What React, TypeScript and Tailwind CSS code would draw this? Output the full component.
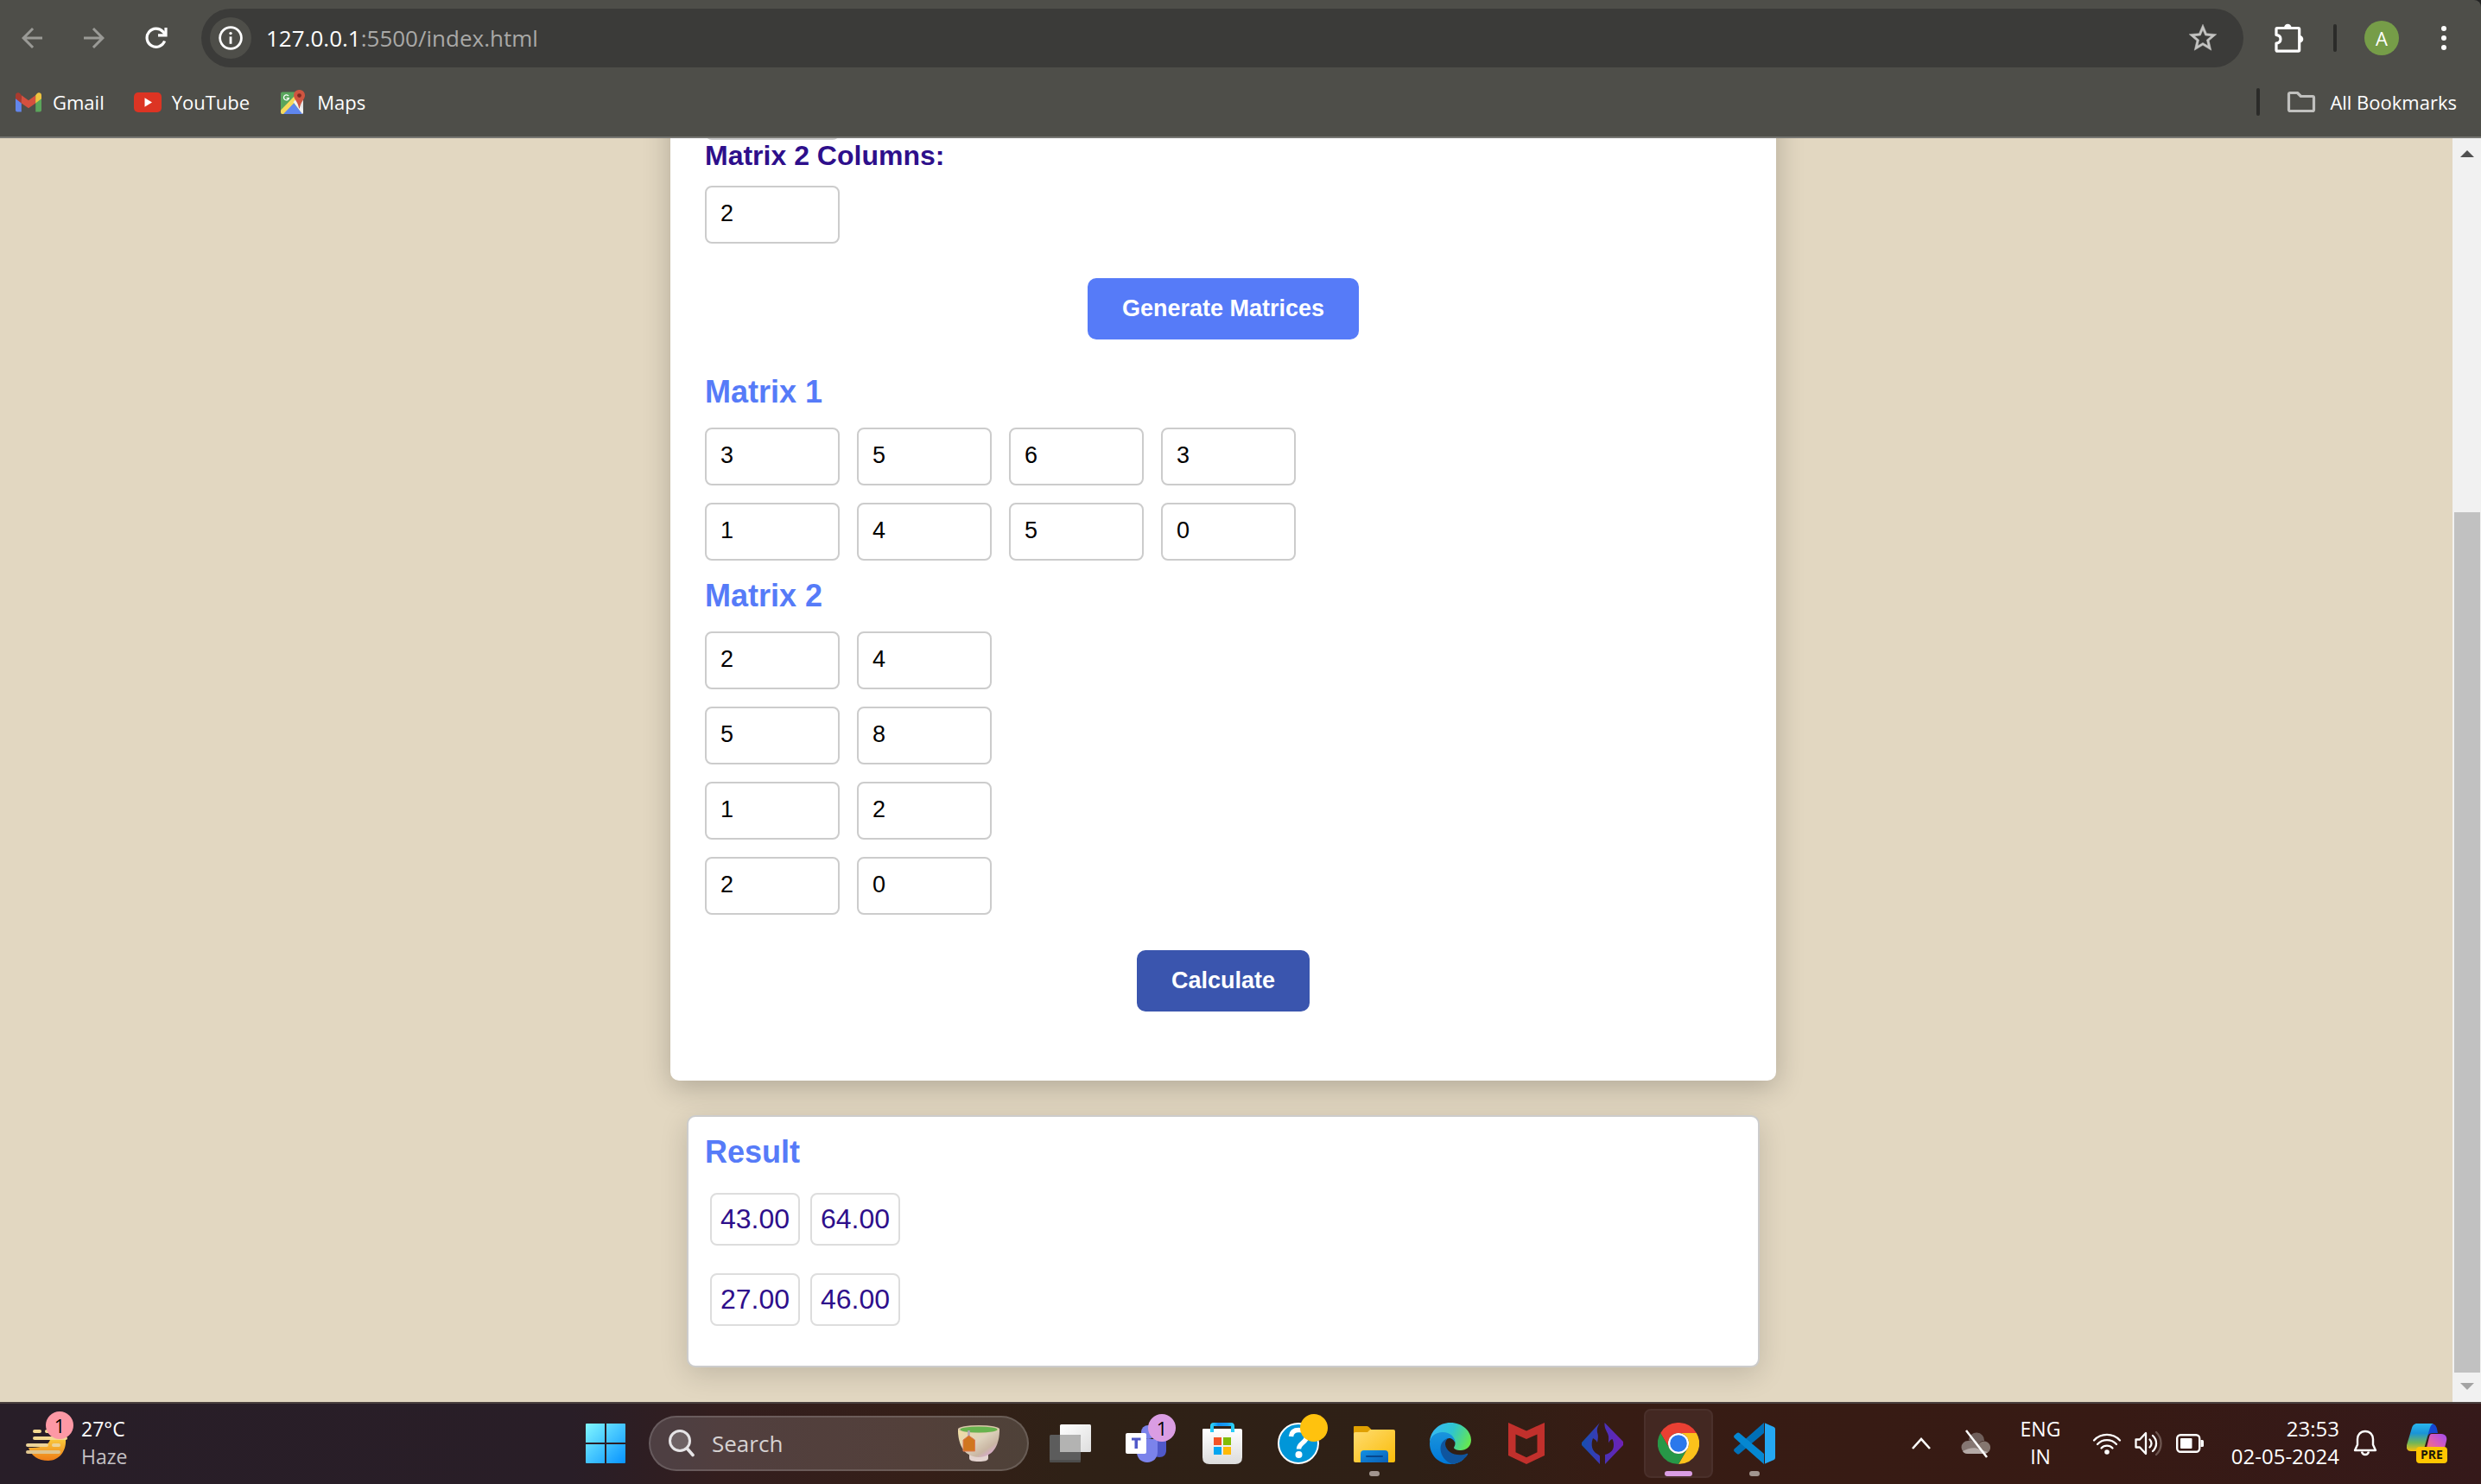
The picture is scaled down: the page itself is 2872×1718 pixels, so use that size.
import React from "react";

const UI = "font-['Open_Sans','Noto_Sans',sans-serif]";

function BackIcon() {
  return (
    <svg viewBox="0 0 24 24" className="size-9" fill="#9a9a96">
      <path d="M20 11H7.83l5.59-5.59L12 4l-8 8 8 8 1.41-1.41L7.83 13H20v-2z" />
    </svg>
  );
}

function ForwardIcon() {
  return (
    <svg viewBox="0 0 24 24" className="size-9" fill="#9a9a96">
      <path d="M12 4l-1.41 1.41L16.17 11H4v2h12.17l-5.58 5.59L12 20l8-8z" />
    </svg>
  );
}

function ReloadIcon() {
  return (
    <svg viewBox="0 0 26 26" className="size-[26px]" fill="none" stroke="#fff" strokeWidth="3.2">
      <path d="M22.6 16.5A10.6 10.6 0 1 1 20.6 5.6L23 8.2" />
      <path d="M24 1v8.9h-9" />
    </svg>
  );
}

function InfoIcon() {
  return (
    <svg viewBox="0 0 28 28" className="size-7" fill="none">
      <circle cx="14" cy="14" r="12.4" stroke="#fff" strokeWidth="2.8" />
      <path d="M14 12.4v8.4" stroke="#fff" strokeWidth="2.8" />
      <circle cx="14" cy="8.6" r="1.7" fill="#fff" />
    </svg>
  );
}

function StarIcon() {
  return (
    <svg viewBox="0 0 24 24" className="size-[38px]" fill="#c4c4c2" stroke="#c4c4c2" strokeWidth="0.3">
      <path d="M22 9.24l-7.19-.62L12 2 9.19 8.63 2 9.24l5.46 4.73L5.82 21 12 17.27 18.18 21l-1.63-7.03L22 9.24zM12 15.4l-3.76 2.27 1-4.28-3.32-2.88 4.38-.38L12 6.1l1.71 4.04 4.38.38-3.32 2.88 1 4.28L12 15.4z" />
    </svg>
  );
}

function PuzzleIcon() {
  return (
    <svg viewBox="0 0 34 34" className="size-[34px]">
      <path
        d="M3 5.5h24.5c.8 0 1.2.5 1.2 1.2V31c0 .8-.5 1.2-1.2 1.2H3.200c-.8 0-1.200-.5-1.200-1.200v-7.800c3.200-.4 5-2.300 5-4.900s-1.800-4.500-5-4.900V6.700c0-.8.4-1.200 1-1.200z"
        fill="none"
        stroke="#fff"
        strokeWidth="3.2"
        strokeLinejoin="round"
      />
      <path d="M11 5a4.300 4.300 0 0 1 8.600 0z M29 14a4.300 4.300 0 0 1 0 8.600z" fill="#fff" />
    </svg>
  );
}

function GmailIcon() {
  return (
    <svg viewBox="0 0 30 24" className="w-[30px] h-6">
      <path d="M0 4.500V21.500c0 1.100.9 2 2 2h4.800V9.500z" fill="#6286ec" />
      <path d="M30 4.500V21.500c0 1.100-.9 2-2 2h-4.800V9.500z" fill="#5ba55b" />
      <path d="M6.800 4.200v9.300l8.200 5.800 8.200-5.800V4.200L15 10.200z" fill="#d5503f" />
      <path d="M0 4.500v3.800l6.800 5.200V4.200L5.200 2.200C3 .4 0 1.700 0 4.500z" fill="#a93a2e" />
      <path d="M30 4.500v3.800l-6.800 5.200V4.200l1.600-2C27 .4 30 1.700 30 4.500z" fill="#eec33f" />
    </svg>
  );
}

function YouTubeIcon() {
  return (
    <svg viewBox="0 0 32 23" className="w-8 h-[23px]">
      <rect width="32" height="23" rx="5" fill="#dc3423" />
      <path d="M12.500 6.300v10.400l8.500-5.200z" fill="#fff" />
    </svg>
  );
}

function MapsIcon() {
  return (
    <svg viewBox="0 0 28 28" className="size-7">
      <path d="M2 2.500h17L24 10v16a2 2 0 0 1-2 2H2a2 2 0 0 1-2-2V4.500a2 2 0 0 1 2-2z" fill="#58a55c" />
      <path d="M15 14l11 12V12l-4-3z" fill="#e4e4e4" />
      <path d="M2 28l12-13.500L25.500 28z" fill="#5f86ee" />
      <path d="M0 23.500L17 6l2.500 5L3 28H2a2 2 0 0 1-2-2z" fill="#f6d95b" />
      <path d="M14.500 14.200l3.200-3.400 8.300 12.500v2.900a1.800 1.800 0 0 1-1 1.800z" fill="#f1f1f1" />
      <path d="M21.500 0A6.300 6.300 0 0 1 28 6.400c0 4.600-4.700 6.600-6.200 15.100h-.6C19.700 13 15 11 15 6.400A6.300 6.300 0 0 1 21.500 0z" fill="#cf5540" />
      <circle cx="21.500" cy="6.600" r="2.400" fill="#7c2a20" />
      <path d="M9 7.200A3 3 0 1 0 9.400 9.600H6.600" stroke="#fff" strokeWidth="1.300" fill="none" />
    </svg>
  );
}

function FolderOutline() {
  return (
    <svg viewBox="0 0 34 26" className="w-[34px] h-[26px]" fill="none" stroke="#c0c0be" strokeWidth="3.200" strokeLinejoin="round">
      <path d="M4 2.500h8.500l4 4H30c.8 0 1.500.7 1.500 1.500v14c0 .8-.7 1.500-1.500 1.500H4c-.8 0-1.500-.7-1.500-1.500V4c0-.8.7-1.500 1.500-1.500z" />
    </svg>
  );
}

function BrowserHeader() {
  return (
    <header className={`shrink-0 bg-[#4e4e49] border-b-2 border-[#767672] text-white rounded-tr-lg ${UI}`}>
      <div className="flex h-[88px] items-center">
        <nav aria-label="Navigation" className="flex items-center gap-9 pl-[19px]">
          <button aria-label="Back"><BackIcon /></button>
          <button aria-label="Forward"><ForwardIcon /></button>
          <button aria-label="Reload" className="pl-[5px]"><ReloadIcon /></button>
        </nav>
        <div className="ml-[39px] flex h-[68px] flex-1 items-center rounded-full bg-[#3b3b39] pl-2.5 pr-7">
          <button aria-label="View site information" className="flex size-12 items-center justify-center rounded-full bg-[#4e4e49]">
            <InfoIcon />
          </button>
          <a href="#address" className="ml-[17px] flex-1 whitespace-nowrap text-[26px] leading-9 text-[#a9a9a7]">
            <span className="text-white">127.0.0.1</span>:5500/index.html
          </a>
          <button aria-label="Bookmark this tab"><StarIcon /></button>
        </div>
        <div className="flex items-center pl-9 pr-10">
          <button aria-label="Extensions"><PuzzleIcon /></button>
          <span className="ml-[34px] h-8 w-1 rounded-sm bg-[#2b2b29]" />
          <button aria-label="Profile" className="ml-8 flex size-10 items-center justify-center rounded-full bg-[#769d48] text-[22px] leading-none">A</button>
          <button aria-label="Menu" className="ml-[49px] flex flex-col gap-[5px]">
            <span className="size-1.5 rounded-full bg-white" />
            <span className="size-1.5 rounded-full bg-white" />
            <span className="size-1.5 rounded-full bg-white" />
          </button>
        </div>
      </div>
      <div className="mb-2.5 flex h-[60px] items-center pl-[18px] pr-7 text-[22px] leading-8">
        <a href="#gmail" className="flex items-center gap-[13px]"><GmailIcon />Gmail</a>
        <a href="#youtube" className="ml-[34px] flex items-center gap-3"><YouTubeIcon />YouTube</a>
        <a href="#maps" className="ml-9 flex items-center gap-3.5"><MapsIcon />Maps</a>
        <span className="ml-auto h-8 w-1 rounded-sm bg-[#2b2b29]" />
        <button className="ml-[31px] flex items-center gap-4"><FolderOutline />All Bookmarks</button>
      </div>
    </header>
  );
}

function NumberField({ value, label, id }: { value: number; label?: string; id?: string }) {
  return (
    <input
      id={id}
      aria-label={label}
      type="number"
      defaultValue={value}
      className="block h-[67px] w-[156px] rounded-lg border-2 border-[#cccccc] bg-white px-4 pb-0.5 text-[27px] leading-8 text-black"
    />
  );
}

function Matrix({ name, rows }: { name: string; rows: number[][] }) {
  return (
    <section>
      <h2 className="text-4xl leading-[42px] font-bold text-[#567bf8]">{name}</h2>
      <div className="mt-5 flex flex-col gap-5">
        {rows.map((row, r) => (
          <div key={r} className="flex gap-5">
            {row.map((v, c) => (
              <NumberField key={c} value={v} label={`${name} row ${r + 1} column ${c + 1}`} />
            ))}
          </div>
        ))}
      </div>
    </section>
  );
}

function Calculator() {
  return (
    <main className="flex min-w-0 flex-1 flex-col items-center overflow-hidden pr-[7px] font-['Liberation_Sans',Arial,sans-serif]">
      <div className="-mt-[65px] w-full max-w-[1280px] shrink-0 rounded-[10px] bg-white px-10 pb-20 shadow-[0_8px_32px_rgba(0,0,0,0.22)]">
        <NumberField value={4} label="Matrix 2 Rows" />
        <label htmlFor="m2cols" className="block text-[32px] leading-9 font-bold text-[#2e0f8b]">Matrix 2 Columns:</label>
        <div className="mt-[17px]"><NumberField id="m2cols" value={2} /></div>
        <div className="mt-10 flex justify-center">
          <button className="h-[71px] rounded-[10px] bg-[#567bf8] px-10 pb-0.5 text-[27px] leading-8 font-bold text-white">Generate Matrices</button>
        </div>
        <div className="mt-10 flex flex-col gap-5">
          <Matrix name="Matrix 1" rows={[[3, 5, 6, 3], [1, 4, 5, 0]]} />
          <Matrix name="Matrix 2" rows={[[2, 4], [5, 8], [1, 2], [2, 0]]} />
        </div>
        <div className="mt-[41px] flex justify-center">
          <button className="h-[71px] rounded-[10px] bg-[#3a55ae] px-10 pb-0.5 text-[27px] leading-8 font-bold text-white">Calculate</button>
        </div>
      </div>
      <section className="mt-10 w-full max-w-[1242px] shrink-0 rounded-[10px] border-2 border-[#cccccc] bg-white px-[19px] pt-5 pb-[30px] shadow-[0_8px_32px_rgba(0,0,0,0.15)]">
        <h2 className="text-4xl leading-[42px] font-bold text-[#567bf8]">Result</h2>
        <table className="mt-2.5">
          <tbody>
            {[["43.00", "64.00"], ["27.00", "46.00"]].map((row, r) => (
              <tr key={r}>
                {row.map((v) => (
                  <td key={v} className="px-1.5 py-4">
                    <span className="block h-[61px] w-[104px] rounded-lg border-2 border-[#dddddd] pt-2.5 text-center text-[32px] leading-9 text-[#2e0f8b]">{v}</span>
                  </td>
                ))}
              </tr>
            ))}
          </tbody>
        </table>
      </section>
    </main>
  );
}

function Scrollbar() {
  return (
    <div aria-hidden="true" className="flex w-[33px] shrink-0 flex-col items-center bg-[#f1f1f1]">
      <svg viewBox="0 0 16 8" className="mt-3.5 h-2 w-4 shrink-0"><path d="M8 0l8 8H0z" fill="#505050" /></svg>
      <div className="flex w-[30px] flex-1 flex-col pt-[411px]">
        <div className="flex-1 bg-[#c1c1c1]" />
      </div>
      <svg viewBox="0 0 16 8" className="mt-3 mb-3.5 h-2 w-4 shrink-0"><path d="M8 8L0 0h16z" fill="#a3a3a3" /></svg>
    </div>
  );
}

function WeatherIcon() {
  return (
    <svg viewBox="0 0 50 48" className="h-12 w-[50px]">
      <defs>
        <linearGradient id="sun" x1="0" y1="0" x2="0" y2="1">
          <stop offset="0" stopColor="#f9c63a" /><stop offset="1" stopColor="#ee7d17" />
        </linearGradient>
      </defs>
      <path d="M46 20c1 13-8 24-20 24S6 38 3 29c12 0 22-1 25-9z" fill="url(#sun)" />
      <g stroke="#f3d991" strokeWidth="4" strokeLinecap="round">
        <path d="M10 10h6M24 10h12" /><path d="M10 18h36" /><path d="M2 26h22M32 26h6" stroke="#ecd398" /><path d="M2 34h36" stroke="#dfc58f" />
      </g>
    </svg>
  );
}

function StartIcon() {
  return (
    <svg viewBox="0 0 46 46" className="size-[46px]">
      <defs>
        <linearGradient id="win" x1="0" y1="0" x2="1" y2="1">
          <stop offset="0" stopColor="#81f7ff" /><stop offset="1" stopColor="#0793ff" />
        </linearGradient>
      </defs>
      <path d="M1 0h21v22H0V1q0-1 1-1zM24 0h21q1 0 1 1v21H24zM0 24h22v22H1q-1 0-1-1zM24 24h22v21q0 1-1 1H24z" fill="url(#win)" />
    </svg>
  );
}

function SearchGlyph() {
  return (
    <svg viewBox="0 0 30 32" className="h-8 w-[30px]" fill="none" stroke="#e6e4e6" strokeLinecap="round">
      <circle cx="13" cy="13" r="11.500" strokeWidth="3" fill="#ffffff" fillOpacity="0.18" />
      <path d="M21.500 22l6.500 7.500" strokeWidth="3.600" />
    </svg>
  );
}

function TeaCup() {
  return (
    <svg viewBox="0 0 48 42" className="h-[42px] w-12">
      <defs>
        <linearGradient id="cup" x1="0" y1="0" x2="1" y2="1">
          <stop offset="0" stopColor="#f3dfa0" /><stop offset=".45" stopColor="#ddd2bd" /><stop offset=".7" stopColor="#c9b6a3" /><stop offset="1" stopColor="#e79cf5" />
        </linearGradient>
      </defs>
      <path d="M13 34h22v4c0 3-4 4-11 4s-11-1-11-4z" fill="#e3d3cf" />
      <path d="M0 4h48c.5 18-7 33-24 33S-.5 22 0 4z" fill="url(#cup)" />
      <ellipse cx="24" cy="4.500" rx="24" ry="4.500" fill="#d8c6a8" />
      <ellipse cx="24" cy="5" rx="21.500" ry="3.400" fill="#67b34e" />
      <path d="M12.500 6v8" stroke="#b4a8b8" strokeWidth="2.500" />
      <path d="M12.500 12l7 5v13H6V17z" fill="#d0761f" stroke="#de7a56" />
    </svg>
  );
}

function TaskViewIcon() {
  return (
    <svg viewBox="0 0 48 48" className="size-12">
      <defs>
        <linearGradient id="tvw" x1="0" y1="0" x2="1" y2="1"><stop offset="0" stopColor="#fff" /><stop offset="1" stopColor="#dedede" /></linearGradient>
      </defs>
      <rect x="12" y="2" width="36" height="32" rx="1.500" fill="url(#tvw)" />
      <rect x="0" y="14" width="36" height="32" rx="1.500" fill="#5c5c5c" />
      <path d="M12 14h22.500q1.500 0 1.500 1.500V34H12z" fill="#b3b3b2" />
      <path d="M0 44.500h36" stroke="#484847" strokeWidth="2" />
    </svg>
  );
}

function TeamsIcon() {
  return (
    <svg viewBox="0 0 48 48" className="size-12">
      <path d="M33 19h14v13c0 5-3 8-8 8s-8-3-8-8z" fill="#5059c9" />
      <circle cx="26" cy="11" r="8" fill="#7b83eb" />
      <path d="M12 19h25v15c0 7-5 12-12 12s-12-5-12-12z" fill="#7b83eb" />
      <rect x="0" y="12" width="24" height="24" rx="2" fill="#fff" />
      <path d="M7 17.500h10.500v3H14V30h-3.500v-9.500H7z" fill="#5059c9" />
    </svg>
  );
}

function StoreIcon() {
  return (
    <svg viewBox="0 0 48 48" className="size-12">
      <defs>
        <linearGradient id="bag" x1="0" y1="0" x2="0" y2="1"><stop offset="0" stopColor="#fff" /><stop offset="1" stopColor="#dcdcdc" /></linearGradient>
        <linearGradient id="hnd" x1="0" y1="0" x2="1" y2="0"><stop offset="0" stopColor="#2bd0f8" /><stop offset=".3" stopColor="#0f8cf0" /><stop offset=".75" stopColor="#1a9ff5" /><stop offset="1" stopColor="#2bd0f8" /></linearGradient>
      </defs>
      <path d="M2 7h43q2 0 2 2v31q0 8-8 8H9q-8 0-8-8V8q0-1 1-1z" fill="url(#bag)" />
      <path d="M12 11V4q0-2 2-2h20q2 0 2 2v7" fill="none" stroke="url(#hnd)" strokeWidth="4" />
      <path d="M14 17h9v9h-9z" fill="#f35325" /><path d="M25 17h9v9h-9z" fill="#81bc06" />
      <path d="M14 28h9v9h-9z" fill="#05a6f0" /><path d="M25 28h9v9h-9z" fill="#ffba08" />
    </svg>
  );
}

function HelpIcon() {
  return (
    <svg viewBox="0 0 48 48" className="size-12">
      <circle cx="24" cy="24" r="23" fill="#0096d8" stroke="#fff" strokeWidth="2" />
      <path d="M15.500 16c.5-5 4-7.500 9-7.500 5.500 0 9 3 9 7.500 0 7-9 7.500-9 14.500" fill="none" stroke="#fff" strokeWidth="5.500" />
      <circle cx="24.500" cy="37" r="4" fill="#fff" />
    </svg>
  );
}

function ExplorerIcon() {
  return (
    <svg viewBox="0 0 48 48" className="size-12">
      <defs>
        <linearGradient id="fld" x1="0" y1="0" x2="1" y2="1"><stop offset="0" stopColor="#ffdc70" /><stop offset="1" stopColor="#fabc09" /></linearGradient>
        <linearGradient id="fbl" x1="0" y1="0" x2="1" y2="1"><stop offset="0" stopColor="#1391e4" /><stop offset="1" stopColor="#0a5fb5" /></linearGradient>
      </defs>
      <path d="M1 4h14q1.500 0 2.500 1l3 3v8H0V5q0-1 1-1z" fill="#e0a000" />
      <path d="M0 13q0-2 2-2h14l3-3h27q2 0 2 2v34q0 2-2 2H2q-2 0-2-2z" fill="url(#fld)" />
      <path d="M8 46V36q0-4 4-4h24q4 0 4 4v10z" fill="url(#fbl)" />
      <path d="M15 39h18" stroke="#07478e" strokeWidth="2" strokeLinecap="round" />
    </svg>
  );
}

function EdgeIcon() {
  return (
    <svg viewBox="0 0 48 48" className="size-12">
      <defs>
        <linearGradient id="eg1" x1="0" y1=".3" x2="1" y2=".6"><stop offset="0" stopColor="#36b8f6" /><stop offset=".5" stopColor="#2fc5cf" /><stop offset="1" stopColor="#66e74f" /></linearGradient>
        <linearGradient id="eg2" x1="0" y1="0" x2="0" y2="1"><stop offset="0" stopColor="#1a94dc" /><stop offset="1" stopColor="#0078d8" /></linearGradient>
      </defs>
      <path d="M0 22C1 9 11 0 24 0c14 0 24 10 24 20 0 8-6 12-12 12-5 0-8-1.500-8-3 0-1 1.500-2 1.500-5 0-5-4-9-9-10C12 12 4 14 0 22z" fill="url(#eg1)" />
      <path d="M0 24c0-8 7-13 15-13 9 0 14.500 6 14.500 12.500-1-3-3.500-5.500-7-5.500-3 0-5 3-5 7 0 9 8 16 22 17-4 4-9.500 6-15.500 6C10 48 0 37 0 24z" fill="url(#eg2)" />
      <path d="M22 18c-6 1-9.500 6-9.500 12 0 8 6 15.500 13.500 17.900C34 47 40 43 44 37c.6-1-.2-1.600-1-1.200C32 40 19 35 18 25c0-3 1.500-6 4-7z" fill="#0f559e" />
    </svg>
  );
}

function McAfeeIcon() {
  return (
    <svg viewBox="0 0 48 48" className="size-12">
      <path fillRule="evenodd" d="M3 0l21 9.500L45 0v38L24 48 3 38zM11.500 13.500v20.800l12.500 6 12.500-6V13.500L24 19z" fill="#c1302c" />
    </svg>
  );
}

function DiamondIcon() {
  return (
    <svg viewBox="0 0 48 48" className="size-12">
      <defs>
        <linearGradient id="dia" gradientUnits="userSpaceOnUse" x1="0" y1="0" x2="48" y2="0"><stop offset="0" stopColor="#1450ae" /><stop offset=".5" stopColor="#4434b8" /><stop offset="1" stopColor="#7020b4" /></linearGradient>
      </defs>
      <path d="M21 0C18 5 17 8 18.500 13c.7 3 .3 6-.5 10-1-2-2-3.500-5-5-2 5-2 12 2 16 2 2 6 3.500 6 5V48L0 26v-3z" fill="url(#dia)" />
      <path d="M26.500 0L48 22v4L27 48V37c5-1.500 10-4 10-11 0-3-.5-5-1.500-7-2 .5-3.500 2-4.500 4.500 0-5 .8-7-1-11C28.500 9 26 6 26.500 0z" fill="url(#dia)" />
    </svg>
  );
}

function ChromeIcon() {
  return (
    <svg viewBox="0 0 48 48" className="size-12">
      <path d="M3.200 12A24 24 0 0 1 44.800 12H24A12 12 0 0 0 13.600 30z" fill="#ea4033" />
      <path d="M44.800 12A24 24 0 0 1 24 48L34.400 30A12 12 0 0 0 24 12z" fill="#fcc21b" />
      <path d="M24 48A24 24 0 0 1 3.200 12L13.600 30A12 12 0 0 0 34.400 30z" fill="#279847" />
      <circle cx="24" cy="24" r="12" fill="#fff" />
      <circle cx="24" cy="24" r="9.800" fill="#2b78ec" />
    </svg>
  );
}

function VSCodeIcon() {
  return (
    <svg viewBox="0 0 48 48" className="size-12">
      <path d="M35 0v12L6.500 36c-.8.700-2 .700-2.800 0L.8 33.500c-1-.9-1-2.300 0-3.200z" fill="#0070b8" />
      <path d="M35 48V36L6.500 12c-.8-.7-2-.7-2.800 0L.8 14.500c-1 .9-1 2.300 0 3.200z" fill="#0587d2" />
      <path d="M35 0l11.500 5q1.500.8 1.500 2.500v33q0 1.700-1.500 2.500L35 48c1 0 1-1 1-2V2c0-1 0-2-1-2z" fill="#25a8f3" />
    </svg>
  );
}

function AppTile({ label, active, mark, badge, children }: { label: string; active?: boolean; mark?: boolean; badge?: React.ReactNode; children: React.ReactNode }) {
  return (
    <button
      aria-label={label}
      className={
        active
          ? "relative flex size-20 items-center justify-center rounded-lg border-2 border-[#4a302b] bg-[#432822]"
          : "relative flex size-20 items-center justify-center"
      }
    >
      {children}
      {badge}
      {active && <span className="absolute bottom-0 h-1.5 w-8 rounded-full bg-[#da9de3]" />}
      {mark && <span className="absolute bottom-0.5 h-1.5 w-3 rounded-full bg-[#a1958f]" />}
    </button>
  );
}

function CloudOff() {
  return (
    <svg viewBox="0 0 34 36" className="h-9 w-[34px]">
      <path d="M9 14a9 9 0 0 1 18 1c-3 0-5 1-7 5z" fill="#6f5f5b" />
      <path d="M8 15c6-1 10 2 12 6l6 9H8A7.500 7.500 0 0 1 8 15z" fill="#857672" />
      <path d="M20 20a7.300 7.300 0 1 1 6 10l-7-8z" fill="#85766f" />
      <path d="M2 27c6-3 12-5 17-3l12 4c-1 1.500-3 2-5 2H8c-3 0-5-1-6-3z" fill="#b5aaa7" />
      <path d="M6 3l24 31" stroke="#fff" strokeWidth="2.500" />
    </svg>
  );
}

function WifiIcon() {
  return (
    <svg viewBox="0 0 34 28" className="h-7 w-[34px]" fill="none" stroke="#fff" strokeWidth="2.300" strokeLinecap="round">
      <path d="M2 10.500a20.500 20.500 0 0 1 30 0M6 15a15 15 0 0 1 22 0M10.500 19.500a9 9 0 0 1 13 0" />
      <circle cx="17" cy="24" r="2.800" fill="#fff" stroke="none" />
    </svg>
  );
}

function SpeakerIcon() {
  return (
    <svg viewBox="0 0 34 30" className="h-[30px] w-[34px]" fill="none" stroke="#fff" strokeWidth="2.300" strokeLinejoin="round" strokeLinecap="round">
      <path d="M2.500 10.500h4.500l7-7.500v24l-7-7.500H2.500z" />
      <path d="M18.500 10.500a6 6 0 0 1 0 9M22 6a12 12 0 0 1 0 18" />
      <path d="M26 2a18 18 0 0 1 0 26" stroke="#6d5650" />
    </svg>
  );
}

function BatteryIcon() {
  return (
    <svg viewBox="0 0 34 24" className="h-6 w-[34px]">
      <rect x="2.200" y="2.200" width="26" height="19.600" rx="4" fill="none" stroke="#fff" strokeWidth="2.400" />
      <rect x="6" y="6" width="13.500" height="12" rx="1" fill="#fff" />
      <path d="M29.500 8h2q1.500 0 1.500 1.500v5q0 1.500-1.500 1.500h-2z" fill="#fff" />
    </svg>
  );
}

function BellIcon() {
  return (
    <svg viewBox="0 0 28 32" className="h-8 w-7" fill="none" stroke="#fff" strokeWidth="2.400" strokeLinejoin="round">
      <path d="M14 2c5.500 0 9 4 9 9v6.500l3 6.500H2l3-6.500V11c0-5 3.500-9 9-9z" />
      <path d="M10 25.500c.5 2.500 2 3.500 4 3.500s3.500-1 4-3.500" />
    </svg>
  );
}

function CopilotIcon() {
  return (
    <svg viewBox="0 0 48 46" className="h-[46px] w-12">
      <defs>
        <linearGradient id="cp1" x1="0" y1="0" x2="0" y2="1"><stop offset="0" stopColor="#29b6ee" /><stop offset=".35" stopColor="#1a94d8" /><stop offset=".7" stopColor="#71b657" /><stop offset="1" stopColor="#fbc00c" /></linearGradient>
        <linearGradient id="cp2" x1="1" y1="0" x2="0" y2="1"><stop offset="0" stopColor="#a14cf0" /><stop offset=".5" stopColor="#d95bb8" /><stop offset="1" stopColor="#ff7a60" /></linearGradient>
      </defs>
      <path d="M27 0c5 0 7 2 8 6l1 5h-6c-3 0-5 1.500-6 4z" fill="#1447d2" />
      <path d="M29 12h11c5 0 7 4 6 8l-3 12H22l4-16c.5-2 1-4 3-4z" fill="url(#cp2)" />
      <path d="M12 0h19c-3 1-4 4-5 8l-5 18c-1 4-3 6-6 6H5c-4 0-6-3-5-7L6 5c1-3 3-5 6-5z" fill="url(#cp1)" />
    </svg>
  );
}

function Taskbar() {
  return (
    <footer className={`flex h-[95px] shrink-0 items-center border-t-2 border-[#4a403f] bg-linear-[90deg,#281e28_0%,#291e27_23%,#331e1e_29%,#351f18_37%,#2f2116_43%,#2f2016_57%,#371c14_65%,#371a14_85%,#35191a_100%] pb-0.5 text-white ${UI}`}>
      <button className="relative flex w-[661px] items-center pl-[30px] text-left text-[23px] leading-8">
        <WeatherIcon />
        <span className="absolute left-[53px] -top-1 flex size-8 items-center justify-center rounded-full bg-[#fd98a5] text-[22px] leading-none text-black">1</span>
        <span className="ml-3.5 flex flex-col pb-0.5">
          <span>27°C</span>
          <span className="text-[#c4c0c4]">Haze</span>
        </span>
      </button>
      <div className="flex items-center">
        <AppTile label="Start"><StartIcon /></AppTile>
        <label className="ml-2.5 mr-2 flex h-16 w-[440px] items-center rounded-full border-2 border-white/15 bg-white/15 pl-[21px] pr-8">
          <SearchGlyph />
          <input type="text" placeholder="Search" aria-label="Search" className="ml-5 min-w-0 flex-1 bg-transparent text-[26px] leading-9 text-white placeholder:text-[#d6d2d2] placeholder:opacity-100" />
          <TeaCup />
        </label>
        <div className="flex items-center gap-2">
          <AppTile label="Task view"><TaskViewIcon /></AppTile>
          <AppTile label="Teams" badge={<span className="absolute left-[42px] top-1.5 flex size-8 items-center justify-center rounded-full bg-[#da9de3] text-[22px] leading-none text-black">1</span>}><TeamsIcon /></AppTile>
          <AppTile label="Microsoft Store"><StoreIcon /></AppTile>
          <AppTile label="Help" badge={<span className="absolute left-[42px] top-1.5 size-8 rounded-full bg-[#ffc20e]" />}><HelpIcon /></AppTile>
          <AppTile label="File Explorer" mark><ExplorerIcon /></AppTile>
          <AppTile label="Edge"><EdgeIcon /></AppTile>
          <AppTile label="McAfee"><McAfeeIcon /></AppTile>
          <AppTile label="Dev tools"><DiamondIcon /></AppTile>
          <AppTile label="Chrome" active><ChromeIcon /></AppTile>
          <AppTile label="Visual Studio Code" mark><VSCodeIcon /></AppTile>
        </div>
      </div>
      <div className="ml-auto flex items-center pr-[38px] text-[23px] leading-8">
        <button aria-label="Show hidden icons">
          <svg viewBox="0 0 24 16" className="h-4 w-6" fill="none" stroke="#fff" strokeWidth="2.600"><path d="M2 14L12 3l10 11" /></svg>
        </button>
        <button aria-label="OneDrive" className="ml-[34px]"><CloudOff /></button>
        <button className="ml-8 w-[52px] pb-0.5 text-center">ENG<br />IN</button>
        <button aria-label="Network, sound and battery" className="ml-[34px] flex items-center gap-3.5"><WifiIcon /><SpeakerIcon /><BatteryIcon /></button>
        <button className="ml-[30px] w-[126px] pb-0.5 text-right text-[24px] leading-8 whitespace-nowrap">23:53<br />02-05-2024</button>
        <button aria-label="Notifications" className="ml-4"><BellIcon /></button>
        <button aria-label="Copilot" className="relative ml-[34px]">
          <CopilotIcon />
          <span className="absolute bottom-0 left-[11px] flex h-[19px] w-9 items-center justify-center rounded bg-[#ffc600] text-[14px] leading-none font-bold text-[#1b1608]">PRE</span>
        </button>
      </div>
    </footer>
  );
}

export default function App() {
  return (
    <div className="flex h-screen flex-col bg-[#222222]">
      <BrowserHeader />
      <div className="flex min-h-0 flex-1 bg-[#e2d7c1]">
        <Calculator />
        <Scrollbar />
      </div>
      <Taskbar />
    </div>
  );
}
